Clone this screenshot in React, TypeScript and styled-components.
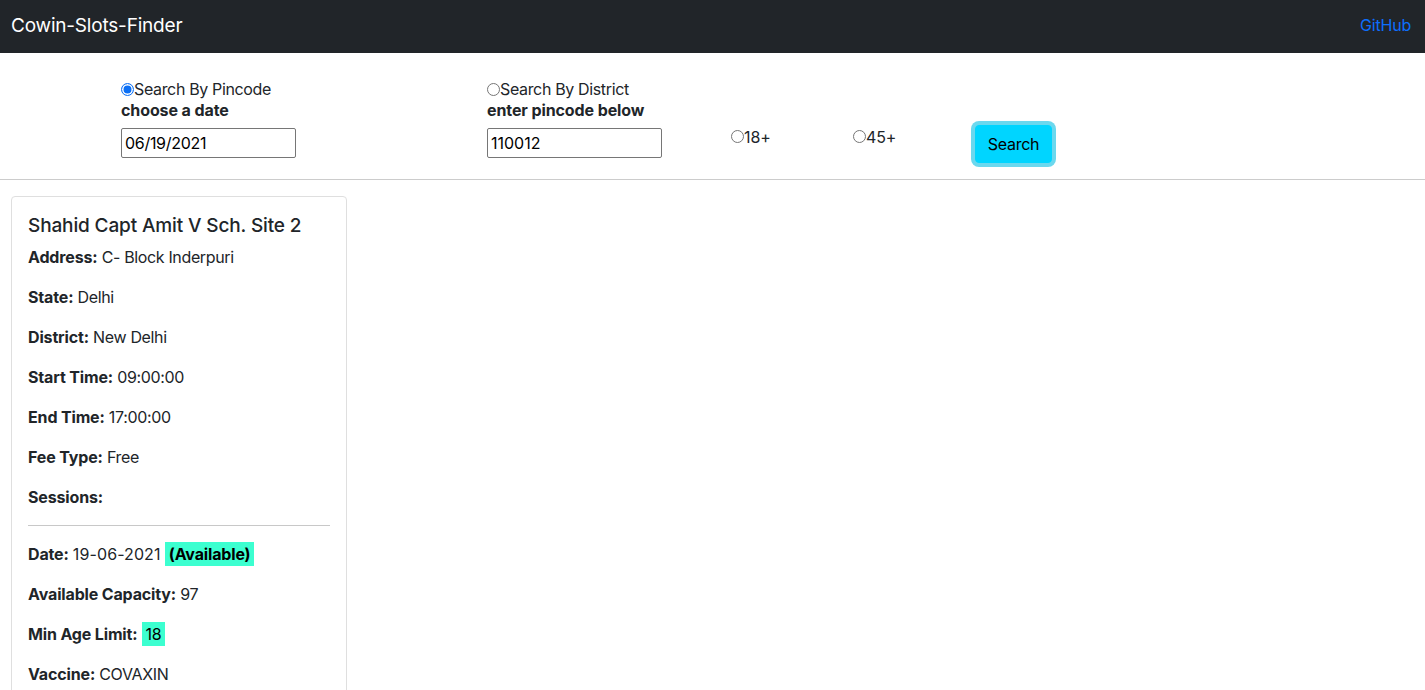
import React from "react";
import styled, { createGlobalStyle } from "styled-components";

const Global = createGlobalStyle`
  html, body { margin: 0; padding: 0; height: 100%; overflow: hidden; background: #fff; }
  body { font-family: Inter, "Liberation Sans", sans-serif; font-size: 16px; line-height: 24px; color: #212529; letter-spacing: -0.35px; }
  b { letter-spacing: -0.15px; }
  * { box-sizing: border-box; }
`;

const Navbar = styled.nav`
  height: 53px;
  background: #212529;
  display: flex;
  align-items: center;
  justify-content: space-between;
  padding: 0 14px 2px 11px;
`;
const Brand = styled.a`
  color: #fff;
  font-size: 19px;
  letter-spacing: -0.2px;
`;
const NavLink = styled.a`
  color: #0d6efd;
  font-size: 16px;
  letter-spacing: -0.2px;
  margin-top: -1px;
`;

const SearchForm = styled.form`
  height: 127px;
  display: flex;
  padding: 26px 0 0 121px;
  border-bottom: 1px solid #ccc;
`;
const Field = styled.div<{ $width: number }>`
  width: ${(p) => p.$width}px;
  display: flex;
  flex-direction: column;
  align-items: flex-start;
`;
const RadioRow = styled.label`
  display: flex;
  align-items: center;
  height: 21px;
  font-size: 16px;
  line-height: 21px;
`;
const Radio = styled.input.attrs({ type: "radio" })`
  appearance: none;
  width: 13px;
  height: 13px;
  margin: 0;
  border-radius: 50%;
  border: 1px solid ${(p) => (p.checked ? "#0b6ff5" : "#767676")};
  background: #fff;
  box-shadow: ${(p) => (p.checked ? "inset 0 0 0 1.5px #fff, inset 0 0 0 7px #0b6ff5" : "none")};
`;
const FieldLabel = styled.label`
  font-weight: 700;
  font-size: 16px;
  height: 21px;
  line-height: 21px;
  margin-bottom: 7px;
  letter-spacing: -0.1px;
`;
const TextInput = styled.input`
  width: 175px;
  height: 30px;
  border: 1px solid #767676;
  border-radius: 2px;
  padding: 0 3px;
  font: 400 16px Inter, "Liberation Sans", sans-serif;
  color: #000;
  background: #fff;
`;
const DateInput = styled(TextInput)`
  letter-spacing: -0.3px;
`;
const AgeOption = styled(RadioRow)<{ $width: number }>`
  width: ${(p) => p.$width}px;
  height: 24px;
  margin-top: 46px;
  letter-spacing: -0.1px;
`;
const AgeRadio = styled(Radio)`
  margin-top: -2px;
`;
const SearchButton = styled.button`
  height: 38px;
  width: 77px;
  margin: 46px 0 0;
  background: #00d5ff;
  color: #000;
  border: 1px solid #00d5ff;
  border-radius: 4px;
  font: 400 16px Inter, "Liberation Sans", sans-serif;
  letter-spacing: -0.3px;
  box-shadow: 0 0 0 4px #6bd8ee;
  padding: 0;
`;

const Results = styled.main`
  padding: 16px 0 0 11px;
`;
const Card = styled.article`
  width: 336px;
  border: 1px solid #dfdfdf;
  border-radius: 4px;
  padding: 17px 16px 16px;
`;
const Title = styled.h5`
  margin: 0 0 7px;
  font-size: 19px;
  font-weight: 500;
  line-height: 24px;
  letter-spacing: -0.13px;
`;
const Line = styled.p`
  margin: 0 0 16px;
  font-size: 16px;
  line-height: 24px;
  white-space: nowrap;
`;
const Rule = styled.hr`
  margin: 16px 0;
  border: 0;
  border-top: 1px solid #c8c8c8;
`;
const DateValue = styled.span`
  letter-spacing: 0.1px;
`;
const Highlight = styled.span`
  background: #3cffd0;
  color: #000;
  padding: 0 4px;
  display: inline-block;
`;

const lines: [string, string][] = [
  ["Address:", "C- Block Inderpuri"],
  ["State:", "Delhi"],
  ["District:", "New Delhi"],
  ["Start Time:", "09:00:00"],
  ["End Time:", "17:00:00"],
  ["Fee Type:", "Free"],
];

export default function App() {
  return (
    <>
      <Global />
      <Navbar>
        <Brand>Cowin-Slots-Finder</Brand>
        <NavLink>GitHub</NavLink>
      </Navbar>
      <SearchForm>
        <Field $width={366}>
          <RadioRow><Radio name="mode" checked readOnly />Search By Pincode</RadioRow>
          <FieldLabel>choose a date</FieldLabel>
          <DateInput defaultValue="06/19/2021" />
        </Field>
        <Field $width={244}>
          <RadioRow><Radio name="mode" />Search By District</RadioRow>
          <FieldLabel>enter pincode below</FieldLabel>
          <TextInput defaultValue="110012" />
        </Field>
        <AgeOption $width={122}><AgeRadio name="age" />18+</AgeOption>
        <AgeOption $width={122}><AgeRadio name="age" />45+</AgeOption>
        <SearchButton type="button">Search</SearchButton>
      </SearchForm>
      <Results>
        <Card>
          <Title>Shahid Capt Amit V Sch. Site 2</Title>
          {lines.map(([k, v]) => (
            <Line key={k}><b>{k}</b> {v}</Line>
          ))}
          <Line><b>Sessions:</b></Line>
          <Rule />
          <Line><b>Date:</b> <DateValue>19-06-2021</DateValue> <Highlight><b>(Available)</b></Highlight></Line>
          <Line><b>Available Capacity:</b> 97</Line>
          <Line><b>Min Age Limit:</b> <Highlight>18</Highlight></Line>
          <Line><b>Vaccine:</b> COVAXIN</Line>
        </Card>
      </Results>
    </>
  );
}
